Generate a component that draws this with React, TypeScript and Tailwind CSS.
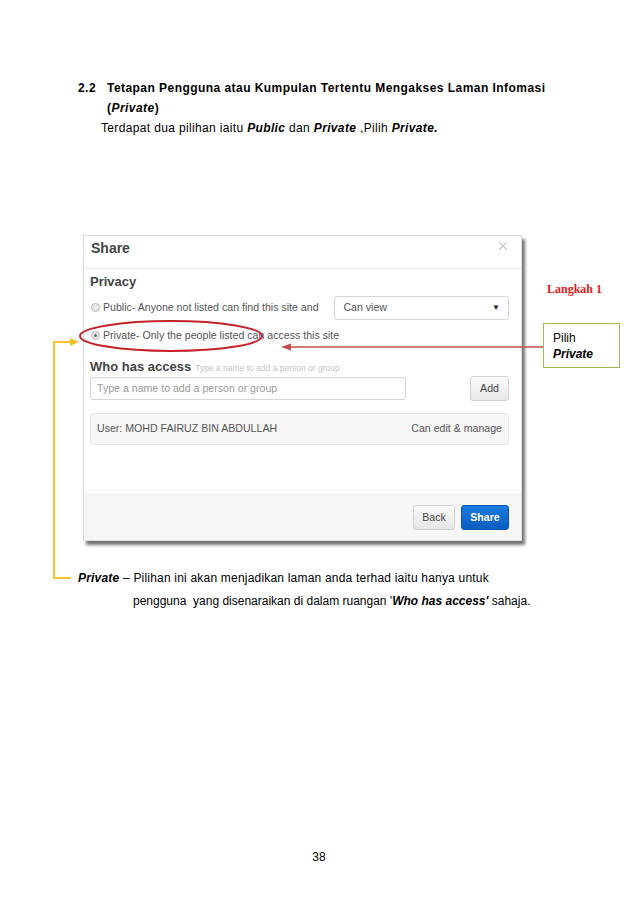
import { X } from "lucide-react"

function Radio({ checked }: { checked?: boolean }) {
    return (
        <span className="flex h-[9px] w-[9px] items-center justify-center rounded-full border border-[#b8b8b8] bg-[#e8e8e8]">
            {checked && <span className="h-[3px] w-[3px] rounded-full bg-[#666]" />}
        </span>
    )
}

function ShareDialog() {
    return (
        <div className="ml-[83px] w-[439px] border border-[#dcdcdc] bg-white font-['Liberation_Sans',Arial,sans-serif] text-[#444] shadow-[3px_4px_3px_rgba(0,0,0,0.55)]">
            {/* Header */}
            <div className="flex h-[33px] items-start justify-between border-b border-[#ececec] px-[7px] pt-[3px]">
                <span className="text-[14px] font-bold leading-[18px] text-[#444]">Share</span>
                <X className="mr-[4px] h-[14px] w-[14px] text-[#c8c8c8]" strokeWidth={2} />
            </div>

            <div className="pl-[6px] pr-[12px] pt-[5px]">
                <div className="text-[13px] font-bold leading-[16px] text-[#444]">Privacy</div>

                <div className="mt-[6px] flex items-center">
                    <div className="flex w-[245px] items-center gap-[3px] pl-[1px] text-[10.6px] text-[#555]">
                        <Radio />
                        <span>Public- Anyone not listed can find this site and</span>
                    </div>
                    <div className="flex h-[24px] w-[175px] items-center justify-between rounded-[3px] border border-[#d4d4d4] px-[8px] text-[10.6px] text-[#555]">
                        <span>Can view</span>
                        <span className="text-[8px] text-[#222]">▼</span>
                    </div>
                </div>

                <div className="mt-[5px] flex items-center gap-[3px] pl-[1px] text-[10.6px] leading-[20px] text-[#555]">
                    <Radio checked />
                    <span>Private- Only the people listed can access this site</span>
                </div>

                <div className="mt-[14px] flex items-baseline gap-[4px]">
                    <span className="text-[13px] font-bold leading-[16px] text-[#444]">Who has access</span>
                    <span className="text-[8.5px] text-[#c4c4c4]">Type a name to add a person or group</span>
                </div>

                <div className="mt-[1px] flex items-center justify-between">
                    <div className="flex h-[23px] w-[316px] items-center rounded-[3px] border border-[#d6d6d6] px-[6px] text-[10.6px] text-[#9a9a9a]">
                        Type a name to add a person or group
                    </div>
                    <div className="flex h-[25px] w-[39px] items-center justify-center rounded-[3px] border border-[#d0d0d0] bg-gradient-to-b from-[#fafafa] to-[#e8e8e8] text-[10.6px] text-[#444]">
                        Add
                    </div>
                </div>

                <div className="mt-[12px] flex h-[32px] items-center justify-between rounded-[3px] border border-[#e6e6e6] bg-[#f6f6f6] px-[6px] text-[10.6px] text-[#555]">
                    <span>User: MOHD FAIRUZ BIN ABDULLAH</span>
                    <span>Can edit &amp; manage</span>
                </div>
            </div>

            {/* Footer */}
            <div className="mt-[49px] flex h-[46px] items-center justify-end gap-[6px] border-t border-[#ececec] bg-[#f6f6f6] pr-[12px]">
                <div className="flex h-[25px] w-[42px] items-center justify-center rounded-[3px] border border-[#d0d0d0] bg-gradient-to-b from-[#fafafa] to-[#e6e6e6] text-[10.6px] text-[#444]">
                    Back
                </div>
                <div className="flex h-[25px] w-[48px] items-center justify-center rounded-[3px] border border-[#0b55b0] bg-gradient-to-b from-[#1a7ae0] to-[#0a5cc0] text-[10.6px] font-bold text-white">
                    Share
                </div>
            </div>
        </div>
    )
}

export default function App() {
    return (
        <div className="relative h-[903px] w-[638px] bg-white font-['Liberation_Sans',Arial,sans-serif] text-black">
            {/* Section heading */}
            <div className="pl-[78px] pt-[78px] text-[12px] leading-[20px]">
                <div className="flex font-bold tracking-[0.45px]">
                    <span className="w-[29px]">2.2</span>
                    <div>
                        <div>Tetapan Pengguna atau Kumpulan Tertentu Mengakses Laman Infomasi</div>
                        <div>
                            (<i>Private</i>)
                        </div>
                    </div>
                </div>
                <div className="pl-[23px] tracking-[0.35px]">
                    Terdapat dua pilihan iaitu <b><i>Public</i></b> dan <b><i>Private</i></b> ,Pilih <b><i>Private.</i></b>
                </div>
            </div>

            {/* Screenshot */}
            <div className="mt-[97px]">
                <ShareDialog />
            </div>

            {/* Explanation */}
            <div className="mt-[26px] pl-[78px] text-[12px] leading-[23px]">
                <div className="tracking-[0.2px]">
                    <b><i>Private</i></b> – Pilihan ini akan menjadikan laman anda terhad iaitu hanya untuk
                </div>
                <div className="pl-[55px]">
                    pengguna&nbsp; yang disenaraikan di dalam ruangan '<b><i>Who has access'</i></b> sahaja.
                </div>
            </div>

            {/* Page number */}
            <div className="absolute bottom-[37px] left-0 right-0 text-center text-[12px]">38</div>

            {/* Annotations */}
            <div className="absolute left-[547px] top-[280px] font-['Liberation_Serif',serif] text-[12px] font-bold text-[#e0201c]">
                Langkah 1
            </div>
            <div className="absolute left-[543px] top-[323px] flex h-[45px] w-[77px] flex-col justify-center border border-[#9bbb59] pl-[9px] text-[12px] leading-[16px]">
                <span>Pilih</span>
                <b><i>Private</i></b>
            </div>

            <svg className="pointer-events-none absolute left-0 top-0" width="638" height="903">
                {/* red ellipse */}
                <ellipse cx="171" cy="336" rx="91" ry="15" fill="none" stroke="#c4232b" strokeWidth="2" />
                {/* red arrow */}
                <line x1="543" y1="347" x2="290" y2="347" stroke="#c0504d" strokeWidth="1.5" />
                <polygon points="281,347 291,343.5 291,350.5" fill="#c0504d" />
                {/* yellow bracket */}
                <polyline points="71,578 54,578 54,342 70,342" fill="none" stroke="#f7c12c" strokeWidth="2" />
                <polygon points="79,342 70,338 70,346" fill="#f7c12c" />
            </svg>
        </div>
    )
}
